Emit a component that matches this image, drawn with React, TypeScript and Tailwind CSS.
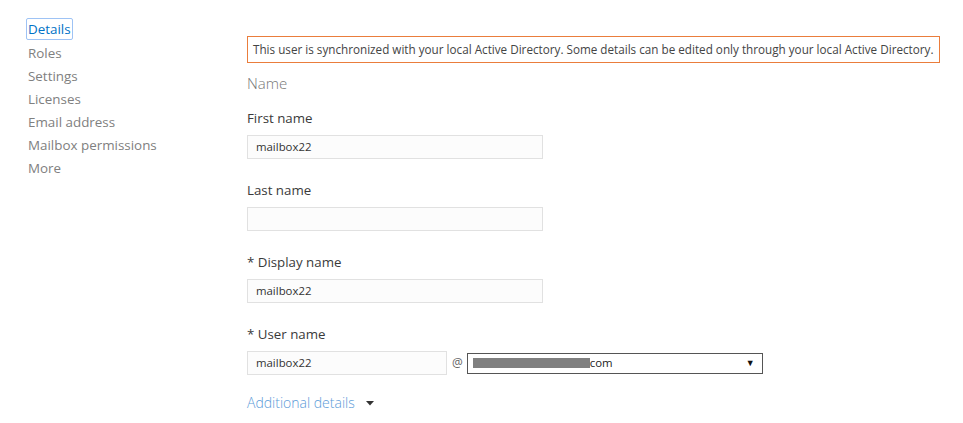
import React from 'react';

const font = { fontFamily: '"Open Sans", "Noto Sans", sans-serif' };

const navItems = ['Details', 'Roles', 'Settings', 'Licenses', 'Email address', 'Mailbox permissions', 'More'];

const Field: React.FC<{ label: string; value?: string }> = ({ label, value = '' }) => (
  <div className="flex flex-col">
    <label className="text-[13.3px] leading-[16px] text-[#3a3a3a] h-[16px]">{label}</label>
    <div className="mt-[9px] w-[296px] h-[24px] border border-[#e1e1e1] bg-[#fcfcfc] pl-[8px] text-[11.4px] leading-[22px] text-[#333]">
      {value}
    </div>
  </div>
);

export default function App() {
  return (
    <div className="w-[963px] h-[423px] bg-white flex items-start overflow-hidden" style={font}>
      {/* Left nav */}
      <nav className="w-[247px] shrink-0 pl-[26px] pt-[18px] flex flex-col items-start">
        {navItems.map((item, i) => (
          <a
            key={item}
            className={
              i === 0
                ? 'px-[1px] h-[22px] leading-[20px] text-[13.4px] text-[#0072c6] border border-[#9ec3f5] rounded-[2px] mb-[1px]'
                : 'px-[1px] h-[23px] leading-[23px] text-[13.4px] text-[#808080] border border-transparent'
            }
          >
            {item}
          </a>
        ))}
      </nav>

      {/* Main */}
      <main className="flex flex-col pt-[36px]">
        <div className="w-[693px] h-[27px] border border-[#ea7d3c] pl-[5px] text-[11.7px] leading-[25px] text-[#444] whitespace-nowrap overflow-hidden">
          This user is synchronized with your local Active Directory. Some details can be edited only through your local Active Directory.
        </div>

        <h2 className="mt-[10px] text-[15px] leading-[20px] font-light text-[#777]">Name</h2>

        <div className="mt-[17px] flex flex-col gap-[23px]">
          <Field label="First name" value="mailbox22" />
          <Field label="Last name" />
          <Field label="* Display name" value="mailbox22" />
          <div className="flex flex-col">
            <label className="text-[13.3px] leading-[16px] text-[#3a3a3a] h-[16px]">* User name</label>
            <div className="mt-[9px] flex items-center">
              <div className="w-[200px] h-[24px] border border-[#e1e1e1] bg-[#fcfcfc] pl-[8px] text-[11.4px] leading-[22px] text-[#333]">
                mailbox22
              </div>
              <span className="ml-[5px] text-[12px] text-[#666]">@</span>
              <div className="ml-[4px] w-[296px] h-[21px] border border-[#555] flex items-center pl-[5px] pr-[7px]">
                <span className="w-[117px] h-[10px] bg-[#808080]" />
                <span className="text-[11.4px] leading-[18px] text-[#222]">com</span>
                <span className="ml-auto text-[9px] text-[#111]">▼</span>
              </div>
            </div>
          </div>
        </div>

        <div className="mt-[18px] flex items-center">
          <span className="text-[14px] leading-[20px] font-light text-[#5a9ad8]">Additional details</span>
          <svg className="ml-[11px]" width="8" height="5" viewBox="0 0 8 5">
            <path d="M0 0 L8 0 L4 4.5 Z" fill="#333" />
          </svg>
        </div>
      </main>
    </div>
  );
}
